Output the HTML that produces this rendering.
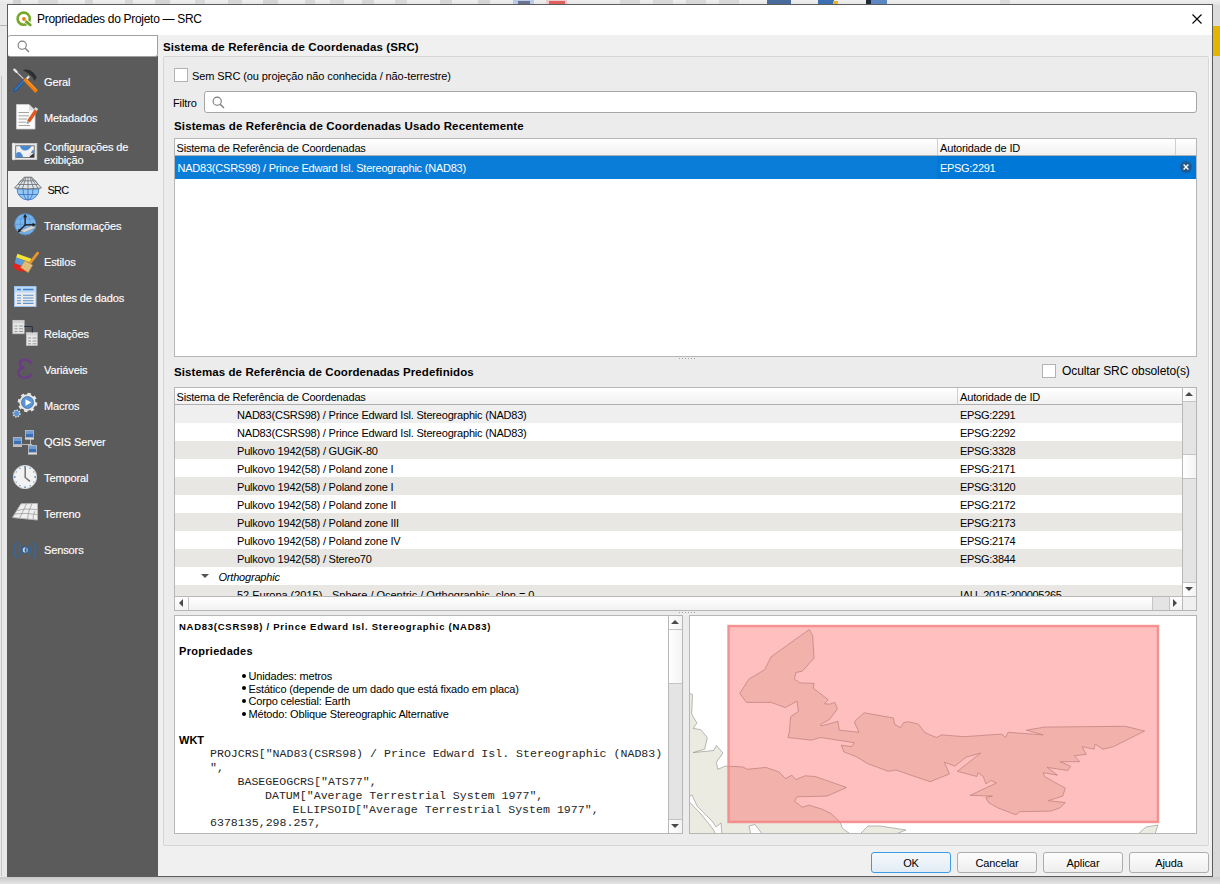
<!DOCTYPE html>
<html><head><meta charset="utf-8">
<style>
*{box-sizing:border-box;margin:0;padding:0}
html,body{width:1220px;height:884px;overflow:hidden;background:#e9e9e9;font-family:"Liberation Sans",sans-serif;color:#000}
.a{position:absolute}
.t{position:absolute;white-space:pre}
.mono{position:absolute;white-space:pre;font-family:"Liberation Mono",monospace}
svg{position:absolute;overflow:visible}
</style></head>
<body>

<div class="a" style="left:0px;top:0px;width:1220px;height:884px;background:#e8e8e8"></div>
<div class="a" style="left:0px;top:0px;width:1220px;height:5px;background:linear-gradient(#efefef,#e3e3e3)"></div>
<div class="a" style="left:13px;top:0px;width:8px;height:4px;background:#d2d2d2"></div>
<div class="a" style="left:38px;top:0px;width:20px;height:4px;background:#d9d9d9"></div>
<div class="a" style="left:85px;top:0px;width:8px;height:4px;background:#d6d6d6"></div>
<div class="a" style="left:125px;top:0px;width:8px;height:4px;background:#d8d8d8"></div>
<div class="a" style="left:155px;top:0px;width:15px;height:4px;background:#d3d3d3"></div>
<div class="a" style="left:195px;top:0px;width:10px;height:4px;background:#d9d9d9"></div>
<div class="a" style="left:228px;top:0px;width:14px;height:4px;background:#d6d6d6"></div>
<div class="a" style="left:263px;top:0px;width:15px;height:4px;background:#d4d4d4"></div>
<div class="a" style="left:305px;top:0px;width:10px;height:4px;background:#d6d6d6"></div>
<div class="a" style="left:330px;top:0px;width:14px;height:4px;background:#d9d9d9"></div>
<div class="a" style="left:362px;top:0px;width:12px;height:4px;background:#d5d5d5"></div>
<div class="a" style="left:395px;top:0px;width:12px;height:4px;background:#d8d8d8"></div>
<div class="a" style="left:440px;top:0px;width:12px;height:4px;background:#d6d6d6"></div>
<div class="a" style="left:478px;top:0px;width:12px;height:4px;background:#d4d4d4"></div>
<div class="a" style="left:620px;top:0px;width:20px;height:4px;background:#d8d8d8"></div>
<div class="a" style="left:653px;top:0px;width:20px;height:4px;background:#d8d8d8"></div>
<div class="a" style="left:686px;top:0px;width:20px;height:4px;background:#d8d8d8"></div>
<div class="a" style="left:719px;top:0px;width:20px;height:4px;background:#d8d8d8"></div>
<div class="a" style="left:1000px;top:0px;width:10px;height:4px;background:#dadada"></div>
<div class="a" style="left:513px;top:0px;width:21px;height:4px;background:#b9cbe6"></div>
<div class="a" style="left:518px;top:1px;width:12px;height:3px;background:#6a7490"></div>
<div class="a" style="left:546px;top:0px;width:21px;height:4px;background:#f0caca"></div>
<div class="a" style="left:549px;top:1px;width:16px;height:3px;background:#e06060"></div>
<div class="a" style="left:767px;top:0px;width:24px;height:4px;background:#4a6c9c"></div>
<div class="a" style="left:818px;top:0px;width:16px;height:4px;background:#3d6fb3"></div>
<div class="a" style="left:833px;top:1px;width:5px;height:3px;background:#e4b71e"></div>
<div class="a" style="left:866px;top:0px;width:5px;height:4px;background:#1f2a3a"></div>
<div class="a" style="left:871px;top:0px;width:16px;height:4px;background:#5b87c2"></div>
<div class="a" style="left:0px;top:25px;width:7px;height:1px;background:#b5b5b5"></div>
<div class="a" style="left:1px;top:76px;width:1px;height:800px;background:#c4c4c4"></div>
<div class="a" style="left:1213px;top:5px;width:7px;height:21px;background:#dcdcdc"></div>
<div class="a" style="left:1213px;top:26px;width:7px;height:30px;background:#e3b500"></div>
<div class="a" style="left:1213px;top:56px;width:7px;height:828px;background:#d9d9d9"></div>
<div class="a" style="left:0px;top:877px;width:1220px;height:7px;background:linear-gradient(#c9c9c9,#e4e4e4)"></div>
<div class="a" style="left:1212px;top:5px;width:1px;height:872px;background:#5c5c5c"></div>
<div class="a" style="left:7px;top:4px;width:1206px;height:873px;border:1px solid #5c5c5c;background:#f0f0f0"></div>
<div class="a" style="left:8px;top:5px;width:1204px;height:30px;background:#fff"></div>
<svg style="left:16px;top:11px" width="17" height="17" viewBox="0 0 17 17">
 <circle cx="7.7" cy="7.7" r="6.1" fill="none" stroke="#78a82a" stroke-width="2.6"/>
 <path d="M9.3 9.6 L15.2 14.6" stroke="#fff" stroke-width="4.4"/>
 <path d="M10.2 10.6 L14.3 14" stroke="#6da22c" stroke-width="2.7" stroke-linecap="round"/>
 <circle cx="8" cy="8" r="1.9" fill="#e87a12"/>
 <path d="M8.6 8.6 L10.2 10.2" stroke="#e0c020" stroke-width="1.6"/>
</svg>
<div class="t" style="left:37px;top:11.84px;font-size:12px;line-height:15px;letter-spacing:-0.3px;">Propriedades do Projeto — SRC</div>
<svg style="left:1192px;top:14px" width="10" height="10" viewBox="0 0 10 10"><path d="M0.5 0.5L9.5 9.5M9.5 0.5L0.5 9.5" stroke="#000" stroke-width="1.1"/></svg>
<div class="a" style="left:7px;top:56px;width:151px;height:821px;background:#5b5b5b"></div>
<div class="a" style="left:8px;top:35px;width:150px;height:22px;background:#fff;border:1px solid #a0a0a0;border-left:none;border-radius:3px 0 3px 3px"></div>
<svg style="left:17px;top:40px" width="13" height="13" viewBox="0 0 13 13"><circle cx="5.2" cy="5.2" r="4.1" fill="none" stroke="#7a7a7a" stroke-width="1.1"/><path d="M8.2 8.2L12 12" stroke="#7a7a7a" stroke-width="1.3"/></svg>
<div class="a" style="left:7px;top:26px;width:1px;height:30px;background:#6e5c22"></div>
<div class="a" style="left:8px;top:171px;width:150px;height:36px;background:#f0f0f0"></div>
<svg style="left:13px;top:69px" width="25" height="25" viewBox="0 0 25 25">
<path d="M1.5 0.8 L11.5 10.8" stroke="#dedede" stroke-width="1.1"/>
<path d="M1.3 0.6 L3.6 2.9" stroke="#e8e8e8" stroke-width="2.2" stroke-linecap="round"/>
<path d="M9.7 1.2 Q15.5 -0.8 20 3.2 Q22.8 5.8 23.8 8.8 L22.3 10.2 L21.6 12 Q19.6 7.2 16.2 5 Q13.2 2.8 9.7 1.2Z" fill="#2c2f31"/>
<path d="M16.2 7.2 L13.6 10" stroke="#e2e2e2" stroke-width="2.2"/>
<path d="M10.8 12 L2 21.2" stroke="#2a5c9c" stroke-width="3.8" stroke-linecap="square"/>
<path d="M10.4 12.2 L2.2 20.8" stroke="#5b8fcf" stroke-width="0.8"/>
<path d="M12.8 11.4 L22.4 21.2" stroke="#f27d0c" stroke-width="3.8" stroke-linecap="square"/>
<path d="M13.8 11 L22.8 20.2" stroke="#ffb347" stroke-width="0.8"/>
</svg>
<svg style="left:16px;top:104px" width="23" height="26" viewBox="0 0 23 26">
<path d="M0.5 0.5 H13 L19 6.5 V25 H0.5Z" fill="#fbfbfb" stroke="#d0d0d0" stroke-width="0.8"/>
<path d="M13 0.5 V6.5 H19" fill="#dedede"/>
<path d="M2.5 8.5H13M2.5 11.8H13M2.5 15H11M2.5 18.2H10M2.5 21.5H14" stroke="#9a9a9a" stroke-width="0.9"/>
<path d="M12.5 17.5 L20 6.5" stroke="#e2571e" stroke-width="3.4"/>
<path d="M11.2 19.6 L12.5 17.5" stroke="#999" stroke-width="2"/>
<path d="M19.4 6 L20.8 4" stroke="#ddd" stroke-width="3.4"/>
</svg>
<svg style="left:12px;top:143px" width="26" height="18" viewBox="0 0 26 18">
<rect x="0.5" y="0.5" width="24.3" height="16" fill="#e9e9e9" stroke="#cfcfcf" stroke-width="0.8"/>
<rect x="0.3" y="0" width="3" height="17" rx="1.4" fill="#f4f4f4" stroke="#c8c8c8" stroke-width="0.6"/>
<rect x="3.8" y="2.8" width="18.4" height="11.8" fill="#f2f2f2" stroke="#4a4a4a" stroke-width="0.7"/>
<path d="M8 3.1 Q9 7.5 13 7.6 Q16.5 7.7 19.8 3.1Z" fill="#4a88d2"/>
<path d="M4.1 14.3 L4.1 10.5 Q6.5 8.2 8.5 9.5 Q10.5 11 11.2 14.3Z" fill="#4a88d2"/>
<path d="M18.8 9.8 Q20.5 6.5 21.9 6.8 V10.2Z" fill="#4a88d2"/>
<path d="M16.8 14.3 L21.9 9.8 V14.3Z" fill="#2e2e2e"/>
<path d="M16.8 14.3 L21.9 9.8 L17.5 10.5Z" fill="#d8d8d8"/>
</svg>
<svg style="left:14px;top:176px" width="28" height="25" viewBox="0 0 28 25">
<circle cx="14" cy="13" r="11" fill="#93c8f4" stroke="#3f74c4" stroke-width="0.8"/>
<path d="M3 13 H25 M14 2 V24 M4.5 18.5 H23.5" stroke="#3f74c4" stroke-width="0.9"/>
<ellipse cx="14" cy="13" rx="5" ry="11" fill="none" stroke="#3f74c4" stroke-width="0.9"/>
<path d="M10.2 1.2 L17.8 1.2 L27.5 12 Q14 13.8 0.5 12Z" fill="#dfe6ee" stroke="#6e6e6e" stroke-width="0.9"/>
<path d="M14 1.2 V12.8 M12 1.2 L8.5 12.5 M16 1.2 L19.5 12.5 M11 1.3 L4 12.2 M17 1.3 L24 12.2 M7.5 4.8 H20.5 M4.2 8.5 H23.8" stroke="#6e6e6e" stroke-width="0.8"/>
</svg>
<svg style="left:14px;top:213px" width="23" height="23" viewBox="0 0 23 23">
<circle cx="11.3" cy="11.3" r="10.6" fill="#79b6ec" stroke="#4f8fd6" stroke-width="0.8"/>
<path d="M1 11.3H21.6M11.3 1V21.6M2.5 6H20M2.5 16.5H20" stroke="#4f8fd6" stroke-width="0.6"/>
<ellipse cx="11.3" cy="11.3" rx="5" ry="10.6" fill="none" stroke="#4f8fd6" stroke-width="0.6"/>
<path d="M6 17.8 L18.4 12.5 L21.3 15 L10.3 19.4Z" fill="#d8d8d8" stroke="#888" stroke-width="0.5"/>
<path d="M11.1 3.5 V12 L20 11.7 M11.1 12 L5 18" fill="none" stroke="#1e1e1e" stroke-width="1.3"/>
<path d="M11.1 0.8 L9 4.5 H13.2Z M22 11.7 L18.5 9.7 V13.7Z M3.5 19.5 L4.8 15.8 L7.2 18.2Z" fill="#1e1e1e"/>
</svg>
<svg style="left:12px;top:252px" width="27" height="22" viewBox="0 0 27 22">
<path d="M5.5 1.8 L19.5 6.8 L17.5 10.2 L4 5.6Z" fill="#f3e23a"/>
<path d="M4 5.6 L13.5 9 L10.5 14.5 L2.8 11.2Z" fill="#5d9ad8"/>
<path d="M2.8 11.2 L10.5 14.5 L15 19.8 L6 19 L0.6 14.8Z" fill="#e3231c"/>
<path d="M13 8.6 L20.6 13.2 L16.2 20.6 L8.6 15.5Z" fill="#e4c58a" stroke="#c98a3a" stroke-width="0.7"/>
<path d="M11.5 11 L18.8 15.8 M10 13.3 L17.3 18.2 M15 9.8 L11 17.3 M18 11.8 L14 19" stroke="#d8a860" stroke-width="0.6"/>
<path d="M18.5 10.5 L25.6 1.2" stroke="#e8952e" stroke-width="2.8" stroke-linecap="round"/>
</svg>
<svg style="left:14px;top:286px" width="23" height="21" viewBox="0 0 23 21">
<rect x="0.5" y="0.5" width="21.5" height="20" fill="#ebebeb" stroke="#9cc3ec"/>
<rect x="1" y="1" width="20.5" height="5.5" fill="#bcdaf6"/>
<path d="M3 3.6H7M9 3.6H19.5" stroke="#3f7fc9" stroke-width="1.5"/>
<path d="M3 9.3H7M9 9.3H19.5M3 12H7M9 12H19.5M3 14.7H7M9 14.7H19.5M3 17.4H7M9 17.4H19.5" stroke="#5b93d2" stroke-width="1.1"/>
</svg>
<svg style="left:12px;top:320px" width="27" height="27" viewBox="0 0 27 27">
<rect x="0.8" y="0.3" width="11.4" height="13.5" fill="#e8e8e8" stroke="#bdbdbd" stroke-width="0.7"/>
<rect x="1" y="0.5" width="11" height="2.8" fill="#d4d4d4"/>
<path d="M2.5 6H5.5M7 6H11M2.5 8.8H5.5M7 8.8H11M2.5 11.5H5.5M7 11.5H11" stroke="#8e8e8e" stroke-width="0.9"/>
<rect x="14.3" y="12.6" width="11" height="13" fill="#e8e8e8" stroke="#bdbdbd" stroke-width="0.7"/>
<rect x="14.5" y="12.8" width="10.6" height="2.6" fill="#d4d4d4"/>
<path d="M16 18H19M20.5 18H24.5M16 21H19M20.5 21H24.5M16 23.8H19M20.5 23.8H24.5" stroke="#8e8e8e" stroke-width="0.9"/>
<path d="M12.2 6.5 H20.3 V12.6" fill="none" stroke="#1f2d44" stroke-width="0.9"/>
</svg>
<svg style="left:16px;top:358px" width="18" height="22" viewBox="0 0 18 22">
<path d="M14.5 5 Q13 1.5 8.5 1.8 Q3.5 2.2 3.8 6 Q4.2 9.3 8.5 9.8 Q2.2 10.5 2.2 14.8 Q2.5 20 9.5 19.8 Q13.5 19.5 15 16.5" fill="none" stroke="#6c3a86" stroke-width="2.4" stroke-linecap="round"/>
</svg>
<svg style="left:12px;top:392px" width="26" height="26" viewBox="0 0 26 26">
<circle cx="15.5" cy="10.5" r="8.2" fill="#e8e8e8" stroke="#e6e6e6" stroke-width="3.2" stroke-dasharray="3.2 3.2"/>
<circle cx="15.5" cy="10.5" r="6" fill="#5b95d4" stroke="#3e6ea6" stroke-width="0.8"/>
<path d="M13.5 7.3 L19.3 10.5 L13.5 13.7Z" fill="#fff"/>
<circle cx="4.6" cy="21.5" r="3.3" fill="#5b95d4" stroke="#dcdcdc" stroke-width="1.6" stroke-dasharray="1.5 1"/>
</svg>
<svg style="left:12px;top:430px" width="27" height="25" viewBox="0 0 27 25">
<path d="M18.5 8.5 V14.5 M10 14.5 H20 M20 14.5 V16" stroke="#cfcfcf" stroke-width="0.8"/>
<rect x="13.5" y="0.5" width="8" height="7" fill="#3a6fb8" stroke="#c8c8c8" stroke-width="0.8"/><rect x="14" y="1" width="7" height="3" fill="#6f9bd5"/><rect x="13" y="8" width="9" height="1.6" fill="#d8d8d8"/>
<rect x="1.5" y="7.5" width="8" height="7" fill="#3a6fb8" stroke="#c8c8c8" stroke-width="0.8"/><rect x="2" y="8" width="7" height="3" fill="#6f9bd5"/><rect x="1" y="15.2" width="9" height="1.6" fill="#d8d8d8"/>
<rect x="16.5" y="15.5" width="8" height="7" fill="#3a6fb8" stroke="#c8c8c8" stroke-width="0.8"/><rect x="17" y="16" width="7" height="3" fill="#6f9bd5"/><rect x="16" y="23" width="9" height="1.6" fill="#d8d8d8"/>
</svg>
<svg style="left:12px;top:464px" width="26" height="26" viewBox="0 0 26 26">
<circle cx="13" cy="13" r="11.6" fill="#f2f2f2" stroke="#d6d6d6" stroke-width="1"/>
<path d="M13.2 2.5 V13.5 L18 17.3" fill="none" stroke="#757575" stroke-width="1.5"/>
<g fill="#5a8fd0"><circle cx="13" cy="2.8" r="0.9"/><circle cx="13" cy="23.2" r="0.9"/><circle cx="2.8" cy="13" r="0.9"/><circle cx="23.2" cy="13" r="0.9"/><circle cx="18.1" cy="4.2" r="0.7"/><circle cx="7.9" cy="4.2" r="0.7"/><circle cx="18.1" cy="21.8" r="0.7"/><circle cx="7.9" cy="21.8" r="0.7"/><circle cx="4.2" cy="7.9" r="0.7"/><circle cx="21.8" cy="7.9" r="0.7"/><circle cx="4.2" cy="18.1" r="0.7"/><circle cx="21.8" cy="18.1" r="0.7"/></g>
</svg>
<svg style="left:12px;top:502px" width="27" height="22" viewBox="0 0 27 22">
<path d="M9 1.8 L25.5 1.5 L25.5 18 L0.5 15.5Z" fill="#efefef" stroke="#b8b8b8" stroke-width="0.9"/>
<path d="M4.5 8.5 Q13 6 25 7.5 M2.5 12 Q14 10.5 25 12.5 M14.5 1.8 Q11 9 7.5 16.5 M20 1.6 Q16 9 15.5 17 M23 9 Q21 13 21 17.5" fill="none" stroke="#a5a5a5" stroke-width="0.9"/>
</svg>
<svg style="left:12px;top:540px" width="26" height="20" viewBox="0 0 26 20">
<path d="M5 1.5 Q-0.5 10 5 18.5 M21 1.5 Q26.5 10 21 18.5" fill="none" stroke="#3d6590" stroke-width="2"/>
<path d="M8.8 4.5 Q5.8 10 8.8 15.5 M17.2 4.5 Q20.2 10 17.2 15.5" fill="none" stroke="#3d6590" stroke-width="1.7"/>
<circle cx="13" cy="10" r="3.8" fill="#355f8c"/>
<path d="M13.6 7.2 A2.8 2.8 0 0 0 13.6 12.8 Q11.6 10 13.6 7.2Z" fill="#c4dcf4"/>
<path d="M13.6 7.4 A2.6 2.6 0 0 1 13.6 12.6 Q15 10 13.6 7.4Z" fill="#6d9bd0"/>
</svg>
<div class="t" style="left:44px;top:75.19px;font-size:11px;line-height:14px;letter-spacing:-0.12px;color:#ffffff;-webkit-text-stroke:0.15px #fff;">Geral</div>
<div class="t" style="left:44px;top:111.19px;font-size:11px;line-height:14px;letter-spacing:-0.12px;color:#ffffff;-webkit-text-stroke:0.15px #fff;">Metadados</div>
<div class="t" style="left:44px;top:140.19px;font-size:11px;line-height:14px;letter-spacing:-0.12px;color:#ffffff;-webkit-text-stroke:0.15px #fff;">Configurações de</div>
<div class="t" style="left:44px;top:153.19px;font-size:11px;line-height:14px;letter-spacing:-0.12px;color:#ffffff;-webkit-text-stroke:0.15px #fff;">exibição</div>
<div class="t" style="left:44px;top:219.19px;font-size:11px;line-height:14px;letter-spacing:-0.12px;color:#ffffff;-webkit-text-stroke:0.15px #fff;">Transformações</div>
<div class="t" style="left:44px;top:255.19px;font-size:11px;line-height:14px;letter-spacing:-0.12px;color:#ffffff;-webkit-text-stroke:0.15px #fff;">Estilos</div>
<div class="t" style="left:44px;top:291.19px;font-size:11px;line-height:14px;letter-spacing:-0.12px;color:#ffffff;-webkit-text-stroke:0.15px #fff;">Fontes de dados</div>
<div class="t" style="left:44px;top:327.19px;font-size:11px;line-height:14px;letter-spacing:-0.12px;color:#ffffff;-webkit-text-stroke:0.15px #fff;">Relações</div>
<div class="t" style="left:44px;top:363.19px;font-size:11px;line-height:14px;letter-spacing:-0.12px;color:#ffffff;-webkit-text-stroke:0.15px #fff;">Variáveis</div>
<div class="t" style="left:44px;top:399.19px;font-size:11px;line-height:14px;letter-spacing:-0.12px;color:#ffffff;-webkit-text-stroke:0.15px #fff;">Macros</div>
<div class="t" style="left:44px;top:435.19px;font-size:11px;line-height:14px;letter-spacing:-0.12px;color:#ffffff;-webkit-text-stroke:0.15px #fff;">QGIS Server</div>
<div class="t" style="left:44px;top:471.19px;font-size:11px;line-height:14px;letter-spacing:-0.12px;color:#ffffff;-webkit-text-stroke:0.15px #fff;">Temporal</div>
<div class="t" style="left:44px;top:507.19px;font-size:11px;line-height:14px;letter-spacing:-0.12px;color:#ffffff;-webkit-text-stroke:0.15px #fff;">Terreno</div>
<div class="t" style="left:44px;top:543.19px;font-size:11px;line-height:14px;letter-spacing:-0.12px;color:#ffffff;-webkit-text-stroke:0.15px #fff;">Sensors</div>
<div class="t" style="left:47.5px;top:182.89px;font-size:11px;line-height:14px;letter-spacing:-0.75px;color:#000;">SRC</div>
<div class="t" style="left:163px;top:40.22px;font-size:11.5px;line-height:14px;letter-spacing:0.11px;font-weight:bold;">Sistema de Referência de Coordenadas (SRC)</div>
<div class="a" style="left:163px;top:56px;width:1046px;height:790px;background:#ececec;border:1px solid #d6d6d6;border-radius:2px"></div>
<div class="a" style="left:1209px;top:57px;width:1px;height:788px;background:#fafafa"></div>
<div class="a" style="left:174px;top:68px;width:14px;height:14px;background:#fff;border:1px solid #b3b3b3"></div>
<div class="t" style="left:192px;top:69.19px;font-size:11px;line-height:14px;letter-spacing:-0.09px;">Sem SRC (ou projeção não conhecida / não-terrestre)</div>
<div class="t" style="left:173px;top:96.19px;font-size:11px;line-height:14px;letter-spacing:-0.12px;">Filtro</div>
<div class="a" style="left:204px;top:91px;width:993px;height:22px;background:#fff;border:1px solid #a6a6a6;border-radius:3px"></div>
<svg style="left:212px;top:96px" width="13" height="13" viewBox="0 0 13 13"><circle cx="5.2" cy="5.2" r="4.1" fill="none" stroke="#7a7a7a" stroke-width="1.1"/><path d="M8.2 8.2L12 12" stroke="#7a7a7a" stroke-width="1.3"/></svg>
<div class="t" style="left:174px;top:119.22px;font-size:11.5px;line-height:14px;letter-spacing:0.13px;font-weight:bold;">Sistemas de Referência de Coordenadas Usado Recentemente</div>
<div class="a" style="left:174px;top:138px;width:1023px;height:219px;background:#fff;border:1px solid #b6b6b6"></div>
<div class="a" style="left:175px;top:139px;width:1021px;height:17px;background:linear-gradient(#ffffff,#f1f1f1);border-bottom:1px solid #b0b0b0"></div>
<div class="a" style="left:937px;top:139px;width:1px;height:16px;background:#d0d0d0"></div>
<div class="a" style="left:1175px;top:139px;width:1px;height:16px;background:#d0d0d0"></div>
<div class="t" style="left:176.5px;top:141.19px;font-size:11px;line-height:14px;letter-spacing:-0.18px;">Sistema de Referência de Coordenadas</div>
<div class="t" style="left:940px;top:141.19px;font-size:11px;line-height:14px;letter-spacing:-0.15px;">Autoridade de ID</div>
<div class="a" style="left:175px;top:156px;width:1021px;height:23px;background:#0078d7"></div>
<div class="a" style="left:175px;top:156px;width:762px;height:23px;background:#0a7dd8"></div>
<div class="t" style="left:177.5px;top:161.19px;font-size:11px;line-height:14px;letter-spacing:-0.22px;color:#fff;">NAD83(CSRS98) / Prince Edward Isl. Stereographic (NAD83)</div>
<div class="t" style="left:940px;top:161.19px;font-size:11px;line-height:14px;letter-spacing:-0.3px;color:#fff;">EPSG:2291</div>
<svg style="left:1180px;top:161px" width="12" height="12" viewBox="0 0 12 12"><circle cx="6" cy="6" r="6" fill="#24598f"/><path d="M3.6 3.6L8.4 8.4M8.4 3.6L3.6 8.4" stroke="#fff" stroke-width="1.4"/></svg>
<div class="a" style="left:679px;top:358px;width:1px;height:1px;background:#a0a0a0"></div>
<div class="a" style="left:682px;top:358px;width:1px;height:1px;background:#a0a0a0"></div>
<div class="a" style="left:685px;top:358px;width:1px;height:1px;background:#a0a0a0"></div>
<div class="a" style="left:688px;top:358px;width:1px;height:1px;background:#a0a0a0"></div>
<div class="a" style="left:691px;top:358px;width:1px;height:1px;background:#a0a0a0"></div>
<div class="a" style="left:694px;top:358px;width:1px;height:1px;background:#a0a0a0"></div>
<div class="t" style="left:174px;top:365.22px;font-size:11.5px;line-height:14px;letter-spacing:0.09px;font-weight:bold;">Sistemas de Referência de Coordenadas Predefinidos</div>
<div class="a" style="left:1042px;top:364px;width:14px;height:14px;background:#fff;border:1px solid #b3b3b3"></div>
<div class="t" style="left:1062px;top:363.94px;font-size:12px;line-height:15px;letter-spacing:-0.1px;">Ocultar SRC obsoleto(s)</div>
<div class="a" style="left:174px;top:387px;width:1023px;height:224px;background:#fff;border:1px solid #b6b6b6"></div>
<div class="a" style="left:175px;top:405px;width:1007px;height:191px;overflow:hidden">
<div class="a" style="left:0;top:0px;width:1007px;height:18px;background:#efefef"></div>
<div class="t" style="left:62px;top:2.99px;font-size:11px;line-height:14px;letter-spacing:-0.2px;">NAD83(CSRS98) / Prince Edward Isl. Stereographic (NAD83)</div>
<div class="t" style="left:785px;top:2.99px;font-size:11px;line-height:14px;letter-spacing:-0.3px;">EPSG:2291</div>
<div class="a" style="left:0;top:18px;width:1007px;height:18px;background:#ffffff"></div>
<div class="t" style="left:62px;top:20.99px;font-size:11px;line-height:14px;letter-spacing:-0.2px;">NAD83(CSRS98) / Prince Edward Isl. Stereographic (NAD83)</div>
<div class="t" style="left:785px;top:20.99px;font-size:11px;line-height:14px;letter-spacing:-0.3px;">EPSG:2292</div>
<div class="a" style="left:0;top:36px;width:1007px;height:18px;background:#e9e7e3"></div>
<div class="t" style="left:62px;top:38.99px;font-size:11px;line-height:14px;letter-spacing:-0.2px;">Pulkovo 1942(58) / GUGiK-80</div>
<div class="t" style="left:785px;top:38.99px;font-size:11px;line-height:14px;letter-spacing:-0.3px;">EPSG:3328</div>
<div class="a" style="left:0;top:54px;width:1007px;height:18px;background:#ffffff"></div>
<div class="t" style="left:62px;top:56.99px;font-size:11px;line-height:14px;letter-spacing:-0.2px;">Pulkovo 1942(58) / Poland zone I</div>
<div class="t" style="left:785px;top:56.99px;font-size:11px;line-height:14px;letter-spacing:-0.3px;">EPSG:2171</div>
<div class="a" style="left:0;top:72px;width:1007px;height:18px;background:#e9e7e3"></div>
<div class="t" style="left:62px;top:74.99px;font-size:11px;line-height:14px;letter-spacing:-0.2px;">Pulkovo 1942(58) / Poland zone I</div>
<div class="t" style="left:785px;top:74.99px;font-size:11px;line-height:14px;letter-spacing:-0.3px;">EPSG:3120</div>
<div class="a" style="left:0;top:90px;width:1007px;height:18px;background:#ffffff"></div>
<div class="t" style="left:62px;top:92.99px;font-size:11px;line-height:14px;letter-spacing:-0.2px;">Pulkovo 1942(58) / Poland zone II</div>
<div class="t" style="left:785px;top:92.99px;font-size:11px;line-height:14px;letter-spacing:-0.3px;">EPSG:2172</div>
<div class="a" style="left:0;top:108px;width:1007px;height:18px;background:#e9e7e3"></div>
<div class="t" style="left:62px;top:110.99px;font-size:11px;line-height:14px;letter-spacing:-0.2px;">Pulkovo 1942(58) / Poland zone III</div>
<div class="t" style="left:785px;top:110.99px;font-size:11px;line-height:14px;letter-spacing:-0.3px;">EPSG:2173</div>
<div class="a" style="left:0;top:126px;width:1007px;height:18px;background:#ffffff"></div>
<div class="t" style="left:62px;top:128.99px;font-size:11px;line-height:14px;letter-spacing:-0.2px;">Pulkovo 1942(58) / Poland zone IV</div>
<div class="t" style="left:785px;top:128.99px;font-size:11px;line-height:14px;letter-spacing:-0.3px;">EPSG:2174</div>
<div class="a" style="left:0;top:144px;width:1007px;height:18px;background:#e9e7e3"></div>
<div class="t" style="left:62px;top:146.99px;font-size:11px;line-height:14px;letter-spacing:-0.2px;">Pulkovo 1942(58) / Stereo70</div>
<div class="t" style="left:785px;top:146.99px;font-size:11px;line-height:14px;letter-spacing:-0.3px;">EPSG:3844</div>
<div class="a" style="left:0;top:162px;width:1007px;height:18px;background:#fff"></div>
<svg style="left:26px;top:169px" width="8" height="4" viewBox="0 0 8 4"><path d="M0 0H8L4 4Z" fill="#555"/></svg>
<div class="t" style="left:43.5px;top:164.69px;font-size:11px;line-height:14px;letter-spacing:-0.2px;font-style:italic;">Orthographic</div>
<div class="a" style="left:0;top:180px;width:1007px;height:18px;background:#e9e7e3"></div>
<div class="t" style="left:62px;top:182.99px;font-size:11px;line-height:14px;letter-spacing:-0.02px;">52 Europa (2015) - Sphere / Ocentric / Orthographic, clon = 0</div>
<div class="t" style="left:785px;top:182.99px;font-size:11px;line-height:14px;letter-spacing:-0.3px;">IAU_2015:200005265</div>
</div>
<div class="a" style="left:175px;top:388px;width:1007px;height:17px;background:linear-gradient(#ffffff,#f1f1f1);border-bottom:1px solid #b0b0b0"></div>
<div class="a" style="left:957px;top:388px;width:1px;height:16px;background:#d0d0d0"></div>
<div class="t" style="left:176.5px;top:390.19px;font-size:11px;line-height:14px;letter-spacing:-0.18px;">Sistema de Referência de Coordenadas</div>
<div class="t" style="left:960px;top:390.19px;font-size:11px;line-height:14px;letter-spacing:-0.15px;">Autoridade de ID</div>
<div class="a" style="left:1182px;top:388px;width:14px;height:208px;background:#e4e4e4;border-left:1px solid #b8b8b8"></div>
<div class="a" style="left:1183px;top:388px;width:13px;height:14px;background:linear-gradient(90deg,#fff,#f3f3f3);border-bottom:1px solid #c4c4c4"></div>
<svg style="left:1185px;top:392px" width="8" height="4" viewBox="0 0 8 4"><path d="M0 4H8L4 0Z" fill="#4a4a4a"/></svg>
<div class="a" style="left:1183px;top:454px;width:13px;height:25px;background:linear-gradient(90deg,#fff,#f3f3f3);border-top:1px solid #c4c4c4;border-bottom:1px solid #c4c4c4"></div>
<div class="a" style="left:1183px;top:582px;width:13px;height:14px;background:linear-gradient(90deg,#fff,#f3f3f3);border-top:1px solid #c4c4c4"></div>
<svg style="left:1185px;top:587px" width="8" height="4" viewBox="0 0 8 4"><path d="M0 0H8L4 4Z" fill="#4a4a4a"/></svg>
<div class="a" style="left:175px;top:596px;width:1021px;height:14px;background:#e4e4e4;border-top:1px solid #b8b8b8"></div>
<div class="a" style="left:175px;top:597px;width:14px;height:13px;background:linear-gradient(#fff,#f3f3f3);border-right:1px solid #c4c4c4"></div>
<svg style="left:179px;top:599px" width="4" height="8" viewBox="0 0 4 8"><path d="M4 0V8L0 4Z" fill="#4a4a4a"/></svg>
<div class="a" style="left:189px;top:597px;width:964px;height:13px;background:linear-gradient(#fff,#f1f1f1);border-right:1px solid #c4c4c4"></div>
<div class="a" style="left:1169px;top:597px;width:14px;height:13px;background:linear-gradient(#fff,#f3f3f3);border-left:1px solid #c4c4c4;border-right:1px solid #b8b8b8"></div>
<svg style="left:1173px;top:599px" width="4" height="8" viewBox="0 0 4 8"><path d="M0 0V8L4 4Z" fill="#4a4a4a"/></svg>
<div class="a" style="left:1183px;top:597px;width:13px;height:13px;background:#f0f0f0"></div>
<div class="a" style="left:679px;top:612px;width:1px;height:1px;background:#a0a0a0"></div>
<div class="a" style="left:682px;top:612px;width:1px;height:1px;background:#a0a0a0"></div>
<div class="a" style="left:685px;top:612px;width:1px;height:1px;background:#a0a0a0"></div>
<div class="a" style="left:688px;top:612px;width:1px;height:1px;background:#a0a0a0"></div>
<div class="a" style="left:691px;top:612px;width:1px;height:1px;background:#a0a0a0"></div>
<div class="a" style="left:694px;top:612px;width:1px;height:1px;background:#a0a0a0"></div>
<div class="a" style="left:174px;top:615px;width:509px;height:219px;background:#fff;border:1px solid #b6b6b6"></div>
<div class="t" style="left:179px;top:621.41px;font-size:9.5px;line-height:12px;letter-spacing:0.74px;font-weight:bold;">NAD83(CSRS98) / Prince Edward Isl. Stereographic (NAD83)</div>
<div class="t" style="left:179px;top:643.79px;font-size:11px;line-height:14px;letter-spacing:0.3px;font-weight:bold;">Propriedades</div>
<div class="a" style="left:242px;top:673.6px;width:4px;height:4px;background:#000;border-radius:2px"></div>
<div class="t" style="left:248.5px;top:668.79px;font-size:11px;line-height:14px;letter-spacing:-0.16px;">Unidades: metros</div>
<div class="a" style="left:242px;top:686.4px;width:4px;height:4px;background:#000;border-radius:2px"></div>
<div class="t" style="left:248.5px;top:681.59px;font-size:11px;line-height:14px;letter-spacing:-0.16px;">Estático (depende de um dado que está fixado em placa)</div>
<div class="a" style="left:242px;top:699.2px;width:4px;height:4px;background:#000;border-radius:2px"></div>
<div class="t" style="left:248.5px;top:694.39px;font-size:11px;line-height:14px;letter-spacing:-0.16px;">Corpo celestial: Earth</div>
<div class="a" style="left:242px;top:712.0px;width:4px;height:4px;background:#000;border-radius:2px"></div>
<div class="t" style="left:248.5px;top:707.19px;font-size:11px;line-height:14px;letter-spacing:-0.16px;">Método: Oblique Stereographic Alternative</div>
<div class="t" style="left:179px;top:733.19px;font-size:11px;line-height:14px;letter-spacing:0px;font-weight:bold;">WKT</div>
<div class="mono" style="left:210px;top:747.21px;font-size:11.6px;line-height:14px;color:#262626">PROJCRS[&quot;NAD83(CSRS98) / Prince Edward Isl. Stereographic (NAD83)</div>
<div class="mono" style="left:210px;top:760.91px;font-size:11.6px;line-height:14px;color:#262626">&quot;,</div>
<div class="mono" style="left:237.5px;top:775.21px;font-size:11.6px;line-height:14px;color:#262626">BASEGEOGCRS[&quot;ATS77&quot;,</div>
<div class="mono" style="left:265px;top:788.71px;font-size:11.6px;line-height:14px;color:#262626">DATUM[&quot;Average Terrestrial System 1977&quot;,</div>
<div class="mono" style="left:292.5px;top:802.51px;font-size:11.6px;line-height:14px;color:#262626">ELLIPSOID[&quot;Average Terrestrial System 1977&quot;,</div>
<div class="mono" style="left:210px;top:816.21px;font-size:11.6px;line-height:14px;color:#262626">6378135,298.257,</div>
<div class="a" style="left:668px;top:616px;width:14px;height:217px;background:#e4e4e4;border-left:1px solid #b8b8b8"></div>
<div class="a" style="left:669px;top:616px;width:13px;height:14px;background:linear-gradient(90deg,#fff,#f3f3f3);border-bottom:1px solid #c4c4c4"></div>
<svg style="left:671px;top:620px" width="8" height="4" viewBox="0 0 8 4"><path d="M0 4H8L4 0Z" fill="#4a4a4a"/></svg>
<div class="a" style="left:669px;top:630px;width:13px;height:54px;background:linear-gradient(90deg,#fff,#f3f3f3);border-bottom:1px solid #c4c4c4"></div>
<div class="a" style="left:669px;top:819px;width:13px;height:14px;background:linear-gradient(90deg,#fff,#f3f3f3);border-top:1px solid #c4c4c4"></div>
<svg style="left:671px;top:824px" width="8" height="4" viewBox="0 0 8 4"><path d="M0 0H8L4 4Z" fill="#4a4a4a"/></svg>
<div class="a" style="left:689px;top:615px;width:508px;height:219px;background:#fff;border:1px solid #b6b6b6;overflow:hidden">
<svg style="left:-690px;top:-616px" width="1220" height="884" viewBox="0 0 1220 884">
<polygon points="689.0,693.0 692.5,694.6 691.7,714.0 696.9,723.2 693.0,728.4 700.8,729.7 707.3,737.5 704.7,749.2 693.0,752.6 713.8,750.5 716.4,745.3 722.9,753.1 716.4,762.2 717.7,769.3 725.5,766.1 742.5,766.9 747.7,769.3 765.9,767.4 778.9,771.9 785.4,778.6 791.9,775.2 795.8,779.7 804.9,775.8 815.3,776.5 846.5,787.5 827.0,796.1 797.1,796.8 794.5,801.3 802.3,807.2 808.8,805.2 821.8,809.1 830.9,813.5 840.0,822.0 842.6,828.6 850.4,834.0 689.0,834.0" fill="#ecebe2" stroke="#9b9b95" stroke-width="0.7"/>
<polygon points="688.0,797.0 692.0,795.0 697.0,806.0 712.0,821.0 716.0,827.0 721.0,823.0 722.0,835.0 716.0,835.0 713.0,829.0 701.0,814.0 688.0,800.5" fill="#fff" stroke="#9b9b95" stroke-width="0.7"/>
<polygon points="749.0,826.0 755.0,824.5 763.0,835.0 751.0,835.0" fill="#fff" stroke="#9b9b95" stroke-width="0.7"/>
<polygon points="860.0,834.0 868.0,826.0 880.0,826.0 906.0,830.0 896.0,834.0" fill="#ecebe2" stroke="#9b9b95" stroke-width="0.7"/>
<polygon points="1138.0,834.0 1146.0,827.0 1158.0,825.0 1155.0,834.0" fill="#ecebe2" stroke="#9b9b95" stroke-width="0.7"/>
<polygon points="809.3,629.5 812.7,636.0 814.0,658.1 802.3,671.2 795.8,672.5 794.5,679.0 799.7,682.9 814.0,683.4 813.2,688.1 828.3,699.8 824.4,703.7 829.6,704.2 834.8,702.4 837.4,708.9 829.6,719.3 820.5,724.5 821.0,726.0 838.0,721.4 839.2,730.2 859.0,732.3 854.3,721.9 858.3,718.0 864.2,712.8 893.4,718.0 894.7,724.5 900.7,727.6 903.8,722.4 909.0,721.9 918.1,724.0 924.6,732.3 930.0,734.9 936.5,737.5 941.7,734.9 963.8,736.7 1001.6,734.1 1005.5,737.5 1008.0,732.3 1043.2,734.9 1026.3,730.2 1044.5,727.1 1125.2,726.3 1144.7,731.0 1113.5,746.6 1103.0,749.2 1095.2,744.0 1093.9,749.2 1082.2,746.6 1086.1,754.4 1074.4,755.7 1079.6,761.7 1060.1,761.7 1070.5,766.1 1067.9,770.5 1047.1,767.4 1057.5,775.2 1043.2,772.6 1044.5,776.5 1053.6,781.7 1065.3,788.2 1062.7,796.1 1048.4,800.7 1065.3,802.6 1060.1,807.8 1051.0,811.1 1019.8,811.7 1015.9,814.8 997.7,807.8 988.5,802.6 985.9,797.3 992.4,796.1 970.3,795.3 996.4,783.0 991.2,780.4 985.9,783.8 983.3,776.5 978.1,772.6 976.8,776.5 957.3,771.3 980.7,753.1 966.4,757.0 954.7,766.1 944.3,762.2 949.5,773.9 930.0,781.7 896.0,770.0 888.2,771.3 867.4,763.5 857.0,757.0 843.9,751.8 841.3,745.3 851.7,746.6 854.3,742.7 820.5,737.5 811.4,740.1 788.0,737.5 789.3,732.3 790.6,716.7 798.4,711.5 797.1,701.1 785.4,707.6 771.1,702.4 746.4,702.4 739.8,693.3 749.0,679.0 764.6,669.8 771.1,656.8" fill="#ecebe2" stroke="#9b9b95" stroke-width="0.7"/>
<rect x="728.5" y="626" width="429.5" height="196" fill="rgba(255,60,60,0.33)" stroke="rgba(246,130,130,0.85)" stroke-width="2.4"/>
</svg></div>
<div class="a" style="left:871px;top:852px;width:80px;height:21px;border:1px solid #3c9be6;background:linear-gradient(#f4f8fc,#e2ecf5);border-radius:3px"></div>
<div class="t" style="left:871px;top:856px;width:80px;text-align:center;font-size:11px;line-height:14px;letter-spacing:-0.1px">OK</div>
<div class="a" style="left:957px;top:852px;width:80px;height:21px;border:1px solid #adadad;background:linear-gradient(#fdfdfd,#eeeeee);border-radius:3px"></div>
<div class="t" style="left:957px;top:856px;width:80px;text-align:center;font-size:11px;line-height:14px;letter-spacing:-0.1px">Cancelar</div>
<div class="a" style="left:1043px;top:852px;width:80px;height:21px;border:1px solid #adadad;background:linear-gradient(#fdfdfd,#eeeeee);border-radius:3px"></div>
<div class="t" style="left:1043px;top:856px;width:80px;text-align:center;font-size:11px;line-height:14px;letter-spacing:-0.1px">Aplicar</div>
<div class="a" style="left:1129px;top:852px;width:80px;height:21px;border:1px solid #adadad;background:linear-gradient(#fdfdfd,#eeeeee);border-radius:3px"></div>
<div class="t" style="left:1129px;top:856px;width:80px;text-align:center;font-size:11px;line-height:14px;letter-spacing:-0.1px">Ajuda</div>
</body></html>
